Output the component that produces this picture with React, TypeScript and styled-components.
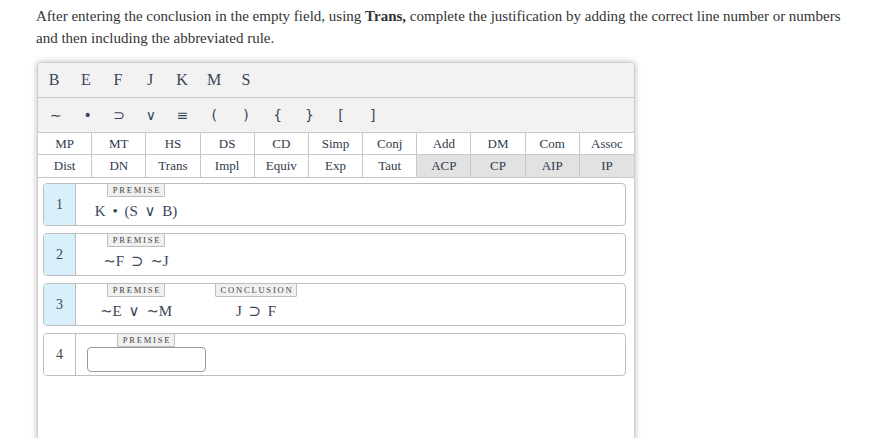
import React from 'react';
import styled, { createGlobalStyle } from 'styled-components';

const GlobalStyle = createGlobalStyle`
	html, body {
		margin: 0;
		padding: 0;
		background: #fff;
	}
	body {
		font-family: 'Liberation Serif', 'DejaVu Serif', serif;
		color: #333;
	}
`;

const LETTERS = ['B', 'E', 'F', 'J', 'K', 'M', 'S'];
const SYMBOLS = ['∼', '•', '⊃', '∨', '≡', '(', ')', '{', '}', '[', ']'];
const RULES: { label: string; dim?: boolean }[][] = [
	[
		{ label: 'MP' },
		{ label: 'MT' },
		{ label: 'HS' },
		{ label: 'DS' },
		{ label: 'CD' },
		{ label: 'Simp' },
		{ label: 'Conj' },
		{ label: 'Add' },
		{ label: 'DM' },
		{ label: 'Com' },
		{ label: 'Assoc' },
	],
	[
		{ label: 'Dist' },
		{ label: 'DN' },
		{ label: 'Trans' },
		{ label: 'Impl' },
		{ label: 'Equiv' },
		{ label: 'Exp' },
		{ label: 'Taut' },
		{ label: 'ACP', dim: true },
		{ label: 'CP', dim: true },
		{ label: 'AIP', dim: true },
		{ label: 'IP', dim: true },
	],
];

type Statement = { tag: string; formula?: string; input?: boolean };

const LINES: { num: number; active: boolean; statements: Statement[] }[] = [
	{ num: 1, active: true, statements: [{ tag: 'Premise', formula: 'K • (S ∨ B)' }] },
	{ num: 2, active: true, statements: [{ tag: 'Premise', formula: '∼F ⊃ ∼J' }] },
	{
		num: 3,
		active: true,
		statements: [
			{ tag: 'Premise', formula: '∼E ∨ ∼M' },
			{ tag: 'Conclusion', formula: 'J ⊃ F' },
		],
	},
	{ num: 4, active: false, statements: [{ tag: 'Premise', input: true }] },
];

const App = () => {
	return (
		<Page>
			<GlobalStyle />
			<Instructions>
				After entering the conclusion in the empty field, using <b>Trans,</b> complete the justification by adding the
				correct line number or numbers and then including the abbreviated rule.
			</Instructions>

			<Panel>
				<LetterBar>
					{LETTERS.map(l => (
						<KeyButton key={l}>{l}</KeyButton>
					))}
				</LetterBar>
				<SymbolBar>
					{SYMBOLS.map(s => (
						<SymbolButton key={s}>{s}</SymbolButton>
					))}
				</SymbolBar>
				<RuleGrid>
					{RULES.map((row, ri) =>
						row.map((r, ci) => (
							<RuleCell key={r.label} $dim={r.dim} $lastCol={ci === row.length - 1} $lastRow={ri === RULES.length - 1}>
								{r.label}
							</RuleCell>
						)),
					)}
				</RuleGrid>

				<Lines>
					{LINES.map(line => (
						<LineBox key={line.num}>
							<LineNum $active={line.active}>{line.num}</LineNum>
							<LineBody>
								{line.statements.map((st, i) => (
									<StatementCol key={i} $input={st.input}>
										<Tag>{st.tag}</Tag>
										{st.input ? <FormulaInput /> : <Formula>{st.formula}</Formula>}
									</StatementCol>
								))}
							</LineBody>
						</LineBox>
					))}
				</Lines>
			</Panel>
		</Page>
	);
};

export default App;

// styles
const Page = styled.div`
	padding: 5px 0 0 36px;
	width: 838px;
`;

const Instructions = styled.p`
	margin: 0;
	font-size: 15px;
	line-height: 22px;
	color: #333;
	width: 812px;

	b {
		font-weight: bold;
	}
`;

const Panel = styled.div`
	margin-top: 13px;
	margin-left: 1px;
	width: 596px;
	height: 420px;
	border: 1px solid #cfcfcf;
	border-radius: 4px;
	background: #fff;
	box-shadow: 0 0 6px rgba(0, 0, 0, 0.28);
	overflow: hidden;
`;

const LetterBar = styled.div`
	display: flex;
	height: 34px;
	background: #f2f2f2;
	border-bottom: 1px solid #c8c8c8;
`;

const KeyButton = styled.div`
	width: 32px;
	display: flex;
	align-items: center;
	justify-content: center;
	font-family: 'Liberation Serif', serif;
	font-size: 16px;
	color: #3a4658;
`;

const SymbolBar = styled.div`
	display: flex;
	height: 34px;
	padding-left: 2px;
	background: #f2f2f2;
	border-bottom: 1px solid #c8c8c8;
`;

const SymbolButton = styled.div`
	width: 31.7px;
	display: flex;
	align-items: center;
	justify-content: center;
	font-family: 'DejaVu Sans', sans-serif;
	font-size: 14px;
	color: #3a4658;
`;

const RuleGrid = styled.div`
	display: grid;
	grid-template-columns: repeat(11, 1fr);
	grid-template-rows: 22px 22px;
	border-bottom: 1px solid #c8c8c8;
`;

const RuleCell = styled.div<{ $dim?: boolean; $lastCol?: boolean; $lastRow?: boolean }>`
	display: flex;
	align-items: center;
	justify-content: center;
	font-size: 13px;
	color: #2f3a4c;
	background: ${({ $dim }) => ($dim ? '#e2e2e2' : '#fff')};
	border-right: ${({ $lastCol }) => ($lastCol ? 'none' : '1px solid #c8c8c8')};
	border-bottom: ${({ $lastRow }) => ($lastRow ? 'none' : '1px solid #c8c8c8')};
`;

const Lines = styled.div`
	display: flex;
	flex-direction: column;
	gap: 7px;
	padding: 5px 8px 0 5px;
`;

const LineBox = styled.div`
	display: flex;
	height: 41px;
	border: 1px solid #bdbdbd;
	border-radius: 4px;
	overflow: hidden;
`;

const LineNum = styled.div<{ $active?: boolean }>`
	width: 31px;
	flex-shrink: 0;
	display: flex;
	align-items: center;
	justify-content: center;
	background: ${({ $active }) => ($active ? '#d7f0fc' : '#fff')};
	border-right: 1px solid #bdbdbd;
	font-size: 14px;
	color: #444;
`;

const LineBody = styled.div`
	display: flex;
	align-items: flex-start;
`;

const StatementCol = styled.div<{ $input?: boolean }>`
	width: 120px;
	margin-left: ${({ $input }) => ($input ? '10px' : '0')};
	display: flex;
	flex-direction: column;
	align-items: center;
`;

const Tag = styled.span`
	margin-top: -1px;
	padding: 0 3px 0 5px;
	height: 12px;
	line-height: 12px;
	font-family: 'Liberation Serif', serif;
	font-size: 8.5px;
	letter-spacing: 1.8px;
	text-transform: uppercase;
	color: #444;
	background: #f0f0f0;
	border: 1px solid #bdbdbd;
	border-radius: 1px;
`;

const Formula = styled.span`
	margin-top: 5px;
	font-family: 'Liberation Serif', 'DejaVu Serif', serif;
	font-size: 15px;
	color: #3a4658;
	white-space: pre;
	word-spacing: 3px;
`;

const FormulaInput = styled.input`
	margin-top: 0;
	width: 119px;
	height: 25px;
	box-sizing: border-box;
	border: 1px solid #9a9a9a;
	border-radius: 4px;
	background: #fff;
	outline: none;
`;
